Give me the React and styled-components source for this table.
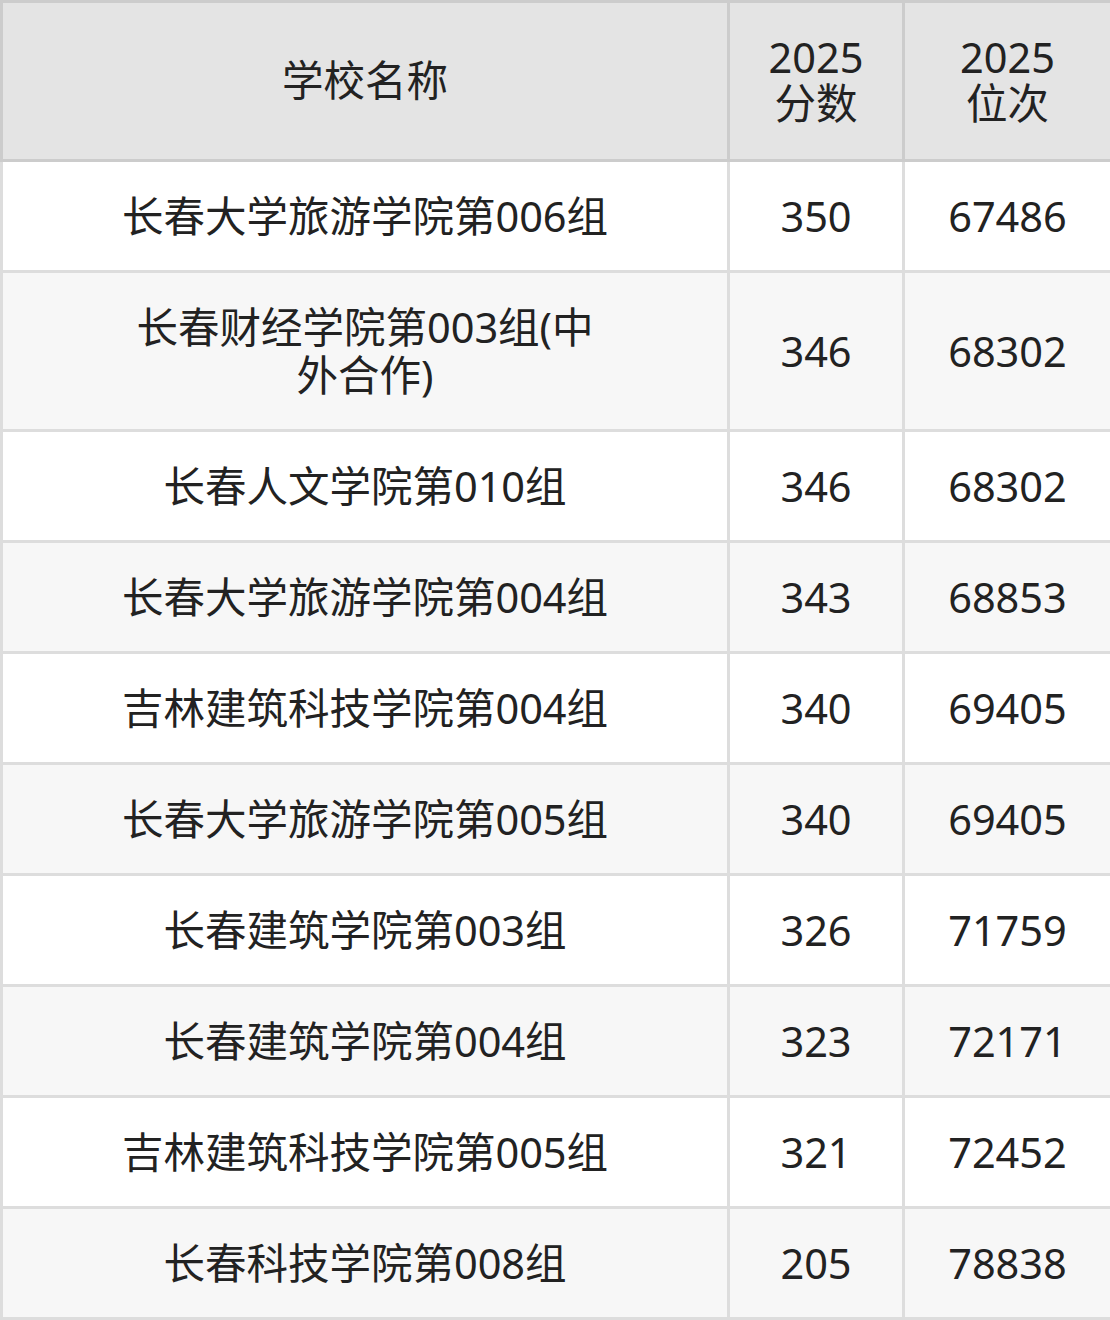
import styled, { createGlobalStyle } from "styled-components";

const GlobalStyle = createGlobalStyle`
  body {
    margin: 0;
    background: #fff;
    font-family: "Noto Sans", "Noto Sans CJK SC", sans-serif;
  }
`;

const rows = [
  ["长春大学旅游学院第006组", "350", "67486"],
  ["长春财经学院第003组(中外合作)", "346", "68302"],
  ["长春人文学院第010组", "346", "68302"],
  ["长春大学旅游学院第004组", "343", "68853"],
  ["吉林建筑科技学院第004组", "340", "69405"],
  ["长春大学旅游学院第005组", "340", "69405"],
  ["长春建筑学院第003组", "326", "71759"],
  ["长春建筑学院第004组", "323", "72171"],
  ["吉林建筑科技学院第005组", "321", "72452"],
  ["长春科技学院第008组", "205", "78838"],
];

const Table = styled.table`
  width: 1110px;
  border-collapse: collapse;
  table-layout: fixed;
  color: #222;
  font-size: 41.5px;
  line-height: 48px;
`;

const Head = styled.th`
  background: #e4e4e4;
  border: 3px solid #ccc;
  font-weight: 400;
  height: 154px;
  padding: 0 10px 2px;
  line-height: 46px;
  text-align: center;
`;

const Row = styled.tr`
  background: ${(p) => (p.$alt ? "#f7f7f7" : "#fff")};
`;

const Cell = styled.td`
  border: 3px solid #ddd;
  padding: 30px ${(p) => (p.$wide ? "114px" : "10px")};
  text-align: center;
`;

export default function App() {
  return (
    <>
      <GlobalStyle />
      <Table>
        <colgroup>
          <col style={{ width: 727 }} />
          <col style={{ width: 175 }} />
          <col style={{ width: 208 }} />
        </colgroup>
        <thead>
          <tr>
            <Head>学校名称</Head>
            <Head>2025<br />分数</Head>
            <Head>2025<br />位次</Head>
          </tr>
        </thead>
        <tbody>
          {rows.map((r, i) => (
            <Row key={i} $alt={i % 2 === 1}>
              <Cell $wide>{r[0]}</Cell>
              <Cell>{r[1]}</Cell>
              <Cell>{r[2]}</Cell>
            </Row>
          ))}
        </tbody>
      </Table>
    </>
  );
}
